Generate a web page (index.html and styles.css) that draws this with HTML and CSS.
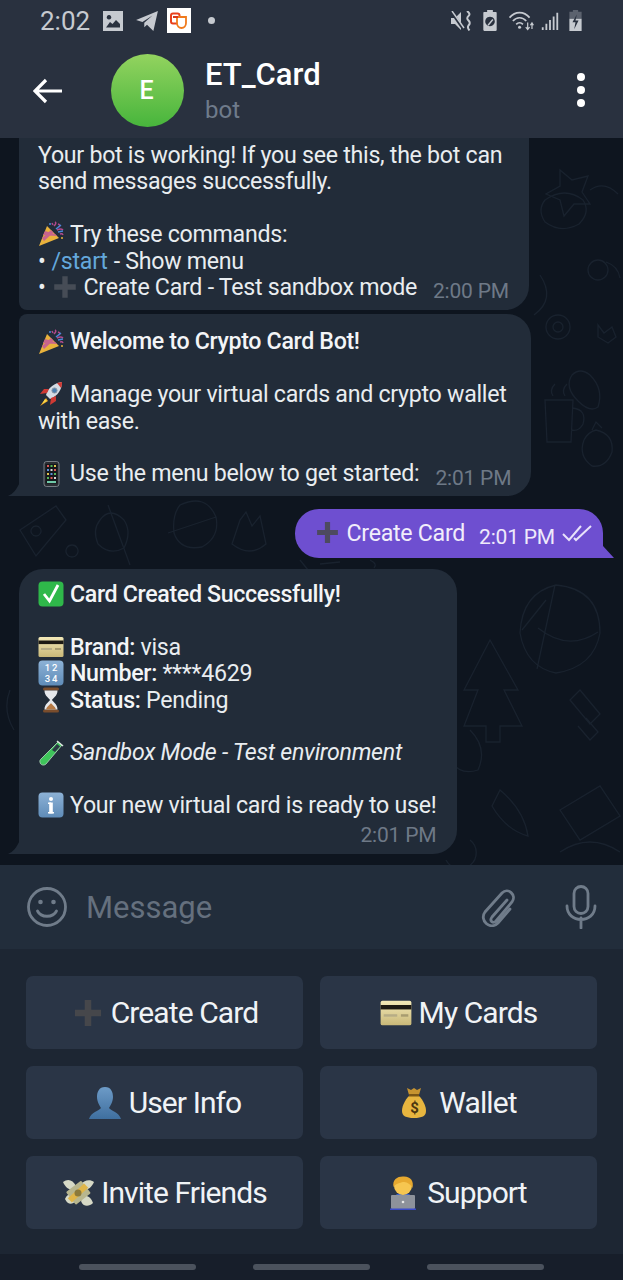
FILE: index.html
```html
<!DOCTYPE html>
<html lang="en">
<head>
<meta charset="utf-8">
<title>ET_Card</title>
<link rel="stylesheet" href="styles.css">
</head>
<body>
<svg class="defs" width="0" height="0" aria-hidden="true">
  <defs>
    <linearGradient id="gradCard" x1="0" y1="0" x2="0" y2="1"><stop offset="0" stop-color="#f3e9b8"/><stop offset="1" stop-color="#c9b878"/></linearGradient>
    <linearGradient id="gradUser" x1="0" y1="0" x2="0" y2="1"><stop offset="0" stop-color="#6d9bc7"/><stop offset="1" stop-color="#3f6f9f"/></linearGradient>
    <linearGradient id="gradKey" x1="0" y1="0" x2="0" y2="1"><stop offset="0" stop-color="#8db2d6"/><stop offset="1" stop-color="#5f8cb8"/></linearGradient>
    <symbol id="e-party" viewBox="0 0 26 26">
      <path d="M1 25 L9 5 L21 17 Z" fill="#e9b23c"/>
      <path d="M4 17 L13 9 L15.500 11.500 L6 20 Z M7 10 L17 13 L19 15 L5 14 Z" fill="#c8648c"/>
      <path d="M16 5 q3-3 1-4 M20 3 q3 1 1 3 M14 2 l1 2 M19 9 q4-2 6 0 M22 13 q2-1 3 1" stroke="#b24a8c" stroke-width="1.500" fill="none"/>
      <path d="M18 8 l5-4 M20 11 l5-1" stroke="#4a86d8" stroke-width="1.600"/>
      <circle cx="24" cy="17" r="1" fill="#e9b23c"/><circle cx="12" cy="3" r="1" fill="#4a86d8"/>
    </symbol>
    <symbol id="e-rocket" viewBox="0 0 26 26">
      <path d="M8 14 C10 6 17 2 24 1 C24 8 20 15 12 18 Z" fill="#d4dce4"/>
      <path d="M19 2 L24 1 C24 3 24 5 23 7 Z" fill="#cf3a34"/>
      <circle cx="16.500" cy="9.500" r="2.600" fill="#4a7fb0" stroke="#8a98a6"/>
      <path d="M9 12 L2 13 L6 8 L11 8 Z M13 17 L12 24 L18 20 L18 15 Z" fill="#cf3a34"/>
      <path d="M8 17 L2 25 L10 20 Z" fill="#f0a51e"/><path d="M7 18 L4 23 L9 20 Z" fill="#f7d94c"/>
    </symbol>
    <symbol id="e-phone" viewBox="0 0 26 26">
      <rect x="6" y="0.500" width="15" height="25" rx="2.500" fill="#2a2d33" stroke="#9aa0a6" stroke-width=".7"/>
      <rect x="7.500" y="3" width="12" height="19.500" fill="#15181c"/>
      <g fill="#d8d8d8"><rect x="9" y="4" width="2" height="2" fill="#d95757"/><rect x="12.500" y="4" width="2" height="2" fill="#57b557"/><rect x="16" y="4" width="2" height="2" fill="#e2c14f"/><rect x="9" y="8" width="2" height="2" fill="#5d8fd9"/><rect x="12.500" y="8" width="2" height="2"/><rect x="16" y="8" width="2" height="2" fill="#d95757"/><rect x="9" y="12" width="2" height="2" fill="#e2c14f"/><rect x="12.500" y="12" width="2" height="2" fill="#5d8fd9"/><rect x="16" y="12" width="2" height="2" fill="#57b557"/><rect x="9" y="16" width="2" height="2" fill="#57b557"/><rect x="12.500" y="16" width="2" height="2" fill="#d95757"/><rect x="16" y="16" width="2" height="2"/><rect x="9" y="20" width="9" height="2" fill="#6fc9a8"/></g>
    </symbol>
    <symbol id="e-check" viewBox="0 0 26 26">
      <rect x=".5" y=".5" width="25" height="25" rx="4" fill="#2fb84a"/>
      <path d="M6 13 L11.500 20 L20 4" fill="none" stroke="#fff" stroke-width="2.800"/>
    </symbol>
    <symbol id="e-card" viewBox="0 0 26 26">
      <rect x=".5" y="3" width="25" height="20" rx="1.500" fill="url(#gradCard)"/>
      <rect x=".5" y="6.500" width="25" height="3.600" fill="#1d1a14"/>
      <rect x="3" y="14" width="11" height="2" fill="#b7ad86"/><rect x="17" y="14" width="6" height="2" fill="#a89c70"/>
    </symbol>
    <symbol id="e-keys" viewBox="0 0 26 26">
      <rect x=".5" y=".5" width="25" height="25" rx="4" fill="url(#gradKey)"/>
      <text x="13" y="11" class="svg-keys" text-anchor="middle">1 2</text>
      <text x="13" y="22" class="svg-keys" text-anchor="middle">3 4</text>
    </symbol>
    <symbol id="e-hour" viewBox="0 0 26 26">
      <rect x="5" y="0.500" width="16" height="3" rx="1.500" fill="#7a4d2c"/><rect x="5" y="22.500" width="16" height="3" rx="1.500" fill="#7a4d2c"/>
      <path d="M6.500 3.500 H19.500 C19.500 9 15 11 14 13 C15 15 19.500 17 19.500 22.500 H6.500 C6.500 17 11 15 12 13 C11 11 6.500 9 6.500 3.500 Z" fill="#e6e8ec"/>
      <path d="M8 22.500 C9 19 12 18 13 16 C14 18 17 19 18 22.500 Z" fill="#b67a45"/>
    </symbol>
    <symbol id="e-tube" viewBox="0 0 26 26">
      <path d="M20 2 L24 5 L8 24 C6 26 2 25 2 22 C1.500 21 2 20 3 19 Z" fill="#3ec45a" stroke="#b7d8c0" stroke-width=".8"/>
      <path d="M19 1 L25 6" stroke="#d8e2dc" stroke-width="1.600"/>
      <path d="M19 4 L22 6.500 L17 12 L14 10 Z" fill="#2b3844"/>
    </symbol>
    <symbol id="e-info" viewBox="0 0 26 26">
      <rect x=".5" y=".5" width="25" height="25" rx="4" fill="url(#gradKey)"/>
      <circle cx="13" cy="7" r="2" fill="#fff"/><rect x="11.200" y="10.500" width="3.600" height="11" fill="#fff"/><rect x="10" y="10.500" width="3" height="1.500" fill="#fff"/><rect x="10" y="20" width="6" height="1.500" fill="#fff"/>
    </symbol>
    <symbol id="e-plus" viewBox="0 0 26 26">
      <path d="M10.500 3 H15.500 V10.500 H23 V15.500 H15.500 V23 H10.500 V15.500 H3 V10.500 H10.500 Z" fill="currentColor"/>
    </symbol>
    <symbol id="e-user" viewBox="0 0 32 34">
      <path d="M16 1 C22 1 24 6 24 11 C24 16 21 20 20 22 C22 25 30 26 32 33 H0 C2 26 10 25 12 22 C11 20 8 16 8 11 C8 6 10 1 16 1 Z" fill="url(#gradUser)"/>
    </symbol>
    <symbol id="e-bag" viewBox="0 0 26 32">
      <path d="M6 1 L10 3 L13 1 L16 3 L20 1 L18 8 H8 Z" fill="#c79430"/>
      <path d="M8 9 H18 C22 13 25 19 25 24 C25 29 21 31 13 31 C5 31 1 29 1 24 C1 19 4 13 8 9 Z" fill="#e7b53f"/>
      <rect x="8" y="7" width="10" height="2.500" fill="#7a5616"/>
      <text x="13" y="26" class="svg-dollar" text-anchor="middle">$</text>
    </symbol>
    <symbol id="e-wings" viewBox="0 0 32 32">
      <path d="M1 5 C6 1 11 3 14 9 L11 13 C7 13 3 10 1 5 Z M32 5 C28 2 22 3 18 8 L22 13 C26 13 30 10 32 5 Z M3 22 C5 17 9 16 12 18 L14 24 C10 28 6 28 3 22 Z M31 26 C27 30 21 30 19 24 L21 19 C25 18 29 20 31 26 Z" fill="#d6d9c6"/>
      <rect x="7" y="8" width="19" height="16" rx="1" fill="#b8b68e" transform="rotate(-38 16 16)"/>
      <rect x="13" y="5" width="6" height="22" fill="#e0b64a" transform="rotate(48 16 16)"/>
      <circle cx="16" cy="16" r="3.500" fill="#8c7a3b"/>
    </symbol>
    <symbol id="e-tech" viewBox="0 0 26 34">
      <path d="M4 24 C4 18 8 17 13 17 C18 17 22 18 22 24 Z" fill="#3a61c9"/>
      <ellipse cx="13" cy="10" rx="9" ry="9" fill="#f6c650"/>
      <path d="M3.500 11 C2 3 8 0 14 .5 C21 1 24 5 22.500 12 C20 7 16 6 13 6 C10 7 6 7 3.500 11 Z" fill="#e7a92f"/>
      <rect x="1" y="19" width="24" height="14" rx="1" fill="#8d929b"/>
      <rect x="0" y="32.500" width="26" height="1.500" fill="#3a4bc9"/>
      <circle cx="13" cy="26" r="1.300" fill="#e8e8e8"/>
    </symbol>
  </defs>
</svg>

<div class="phone">
  <header class="appbar">
    <div class="status">
      <div class="status-left">
        <span class="clock">2:02</span>
        <svg class="st-ico" width="20" height="20" viewBox="0 0 20 20"><path fill="#c6cad0" fill-rule="evenodd" d="M0 0 H20 V20 H0 Z M3 16.500 H17 V13 L13 9 L9.500 13 L7 11 Z M6 4 a2.300 2.300 0 1 0 .01 0 Z"/></svg>
        <svg class="st-ico" width="24" height="20" viewBox="0 0 24 22"><path fill="#c6cad0" d="M0 10 L24 0 L19 22 L12 15 L9 18 L9 13 L18 5 L7 12 Z"/></svg>
        <span class="appicon"><svg width="18" height="18" viewBox="0 0 18 18"><rect x="1" y="1.500" width="8.500" height="10" rx="2" fill="none" stroke="#e8401c" stroke-width="2"/><path d="M7 5 H16 V11 C16 14 14 16 11.500 16 C9 16 7 14 7 11 Z" fill="#fff" stroke="#f07a1c" stroke-width="1.800"/><path d="M3 5 H8" stroke="#d8361c" stroke-width="2"/></svg></span>
        <span class="st-dot"></span>
      </div>
      <div class="status-right">
        <svg class="st-wide" width="21" height="20" viewBox="0 0 21 20"><path fill="#c6cad0" d="M0 7 H4 L10 1 V19 L4 13 H0 Z"/><path d="M0 0 L13 19" stroke="#29313f" stroke-width="3"/><path d="M1 0 L13 17" stroke="#c6cad0" stroke-width="1.500"/><path d="M16 0 q4 3 1.500 5 q-2.500 2 0 4.500 q2.500 2.500 0 5 q-1.500 2 1 5" fill="none" stroke="#c6cad0" stroke-width="2"/></svg>
        <svg class="st-wide" width="14" height="21" viewBox="0 0 14 22"><path fill="#c6cad0" fill-rule="evenodd" d="M4 0 H10 V2 H13 C13.500 2 14 2.500 14 3 V21 C14 21.500 13.500 22 13 22 H1 C.5 22 0 21.500 0 21 V3 C0 2.500 .5 2 1 2 H4 Z M7 7 a5 5 0 1 0 .01 0 Z"/><path d="M5 16 L10 10" stroke="#c6cad0" stroke-width="1.500"/></svg>
        <svg class="st-narrow" width="26" height="21" viewBox="0 0 26 22"><g fill="none" stroke="#c6cad0" stroke-width="1.800"><path d="M1 8 C7 1 16 1 22 8"/><path d="M4.500 11.500 C8.500 7 14.500 7 18.500 11.500"/><path d="M8 15 C10 13 13 13 15 15"/></g><circle cx="11.500" cy="18" r="1.600" fill="#c6cad0"/><path d="M20 13 v7 M18 18 l2 2.500 l2-2.500 M24.500 20 v-6 M22.800 16 l1.700-2.500 l1.500 2.500" fill="none" stroke="#c6cad0" stroke-width="1.300"/></svg>
        <svg width="18" height="20" viewBox="0 0 18 22"><path fill="#c6cad0" d="M0 18 h2 v3 h-2 Z M4 14 h2 v7 h-2 Z M8 10 h2 v11 h-2 Z M12 6 h2 v15 h-2 Z M16 2 h2 v19 h-2 Z"/></svg>
        <svg width="15" height="21" viewBox="0 0 14 24"><path fill="#5b626e" d="M4 0 H10 V2 H14 V10 H0 V2 H4 Z"/><path fill="#c6cad0" d="M0 10 H14 V24 H0 Z"/><path fill="#29313f" d="M8.500 5 L3.500 14 H7 L5.500 22 L10.500 12 H7 Z"/></svg>
      </div>
    </div>
    <div class="titlebar">
      <svg class="back" width="30" height="26" viewBox="0 0 30 26"><path d="M29 13 H2 M13 2 L2 13 L13 24" fill="none" stroke="#fff" stroke-width="3.200"/></svg>
      <div class="avatar">E</div>
      <div class="title">
        <div class="title-name">ET_Card</div>
        <div class="title-sub">bot</div>
      </div>
      <div class="dots"><span></span><span></span><span></span></div>
    </div>
  </header>

  <main class="chat">
    <svg class="wallpaper" width="623" height="727" viewBox="0 138 623 727" aria-hidden="true">
      <g fill="none" stroke="#19222e" stroke-width="1.300">
        <path d="M560 170 l12 10 l16-4 l-6 16 l8 12 l-16 0 l-10 12 l-4-16 l-14-6 l14-8 Z"/>
        <path d="M545 200 q20-14 38 0 q8 12-4 24 q-18 10-34-2 q-8-12 0-22 Z M590 190 q14-10 28 4"/>
        <circle cx="598" cy="270" r="10"/><path d="M606 262 q12 4 14 16 M540 275 q16 24 -6 40"/>
        <circle cx="558" cy="327" r="12"/><circle cx="558" cy="327" r="5"/><path d="M598 325 l6 8 l8-6 l4 10 l-8 6 l-10-6 Z"/>
        <path d="M590 375 q14 14 8 32 q-8 6-20-6 q-14-14-6-26 q8-8 18 0 Z"/>
        <path d="M545 400 h28 l-2 42 h-24 Z M573 408 q14 2 10 16 q-4 8-12 6 M553 396 q-4-6 2-12 M565 396 q-4-6 2-12"/>
        <path d="M596 430 q18 4 16 22 q-6 16-20 14 q-14-10-8-26 q4-8 12-10 Z M592 430 l4-8 l6 6"/>
        <path d="M180 505 q26-12 36 12 q4 20-14 30 q-22 4-28-14 q-2-18 6-28 Z M168 533 l48-16"/>
        <path d="M20 530 l36 -24 l10 14 l-30 36 Z M36 526 a5 5 0 1 0 .01 0"/><path d="M72 545 a6 6 0 1 0 .01 0 M108 505 l22 60"/>
        <path d="M240 520 l-8 24 q18 14 34 0 l-6-28 l-8 10 l-6-14 Z"/>
        <path d="M100 520 q10-14 24 0 q8 12 0 28 q-14 8-26-4 q-6-14 2-24 Z"/>
        <path d="M300 560 l8 10 M340 562 l-20 2 M370 560 q8 4 4 8"/>
        <path d="M556 585 q44 4 44 48 q-6 34-44 40 q-30-6-36-40 q2-40 36-48 Z M555 585 l-18 84 M598 632 q-30 20 -60 -4 M522 630 l24-30"/>
        <path d="M490 640 l28 50 l-14 0 l18 36 l-22 0 l0 16 l-14 0 l0-16 l-22 0 l14-36 l-14 0 Z"/>
        <path d="M580 690 l20 24 l-10 10 l-20-24 Z M586 718 l12 14 l-8 8 l-12-14"/>
        <path d="M500 790 q24 20 28 46 q-22-6-36-30 Z M560 810 l40-24 l20 30 l-40 24 Z"/>
        <path d="M10 690 q-8 20 4 40 M470 730 q18 18 8 40 q-18 6-28-10"/>
        <path d="M470 840 a16 16 0 1 1 -24 20 M560 852 q30-20 60 0"/>
      </g>
    </svg>

    <article class="bubble in grouped-bottom first">
      <div class="line"><span>Your bot is working! If you see this, the bot can</span></div>
      <div class="line"><span>send messages successfully.</span></div>
      <div class="line"></div>
      <div class="line"><svg class="emoji"><use href="#e-party"/></svg><span>Try these commands:</span></div>
      <div class="line tight"><span>•</span><span class="link">/start</span><span>- Show menu</span></div>
      <div class="line last">
        <div class="line tight"><span>•</span><svg class="emoji plus-small"><use href="#e-plus"/></svg><span>Create Card - Test sandbox mode</span></div>
        <time class="time">2:00 PM</time>
      </div>
    </article>

    <article class="bubble in tailed grouped-top second">
      <div class="line"><svg class="emoji"><use href="#e-party"/></svg><strong>Welcome to Crypto Card Bot!</strong></div>
      <div class="line"></div>
      <div class="line"><svg class="emoji"><use href="#e-rocket"/></svg><span>Manage your virtual cards and crypto wallet</span></div>
      <div class="line"><span>with ease.</span></div>
      <div class="line"></div>
      <div class="line last">
        <div class="line"><svg class="emoji"><use href="#e-phone"/></svg><span>Use the menu below to get started:</span></div>
        <time class="time">2:01 PM</time>
      </div>
      <svg class="tail tail-left" width="12" height="14" viewBox="0 0 12 14"><path d="M12 0 V14 H0 C5 12 9 7 12 0 Z" fill="#222c39"/></svg>
    </article>

    <article class="bubble out">
      <div class="line last">
        <div class="line"><svg class="emoji plus-dark"><use href="#e-plus"/></svg><span>Create Card</span></div>
        <div class="out-meta">
          <time class="time">2:01 PM</time>
          <svg width="30" height="18" viewBox="0 0 30 18"><path d="M1 10 L7 16 L19 2 M12 14 L14 16 L29 2" fill="none" stroke="#e8e2fa" stroke-width="2"/></svg>
        </div>
      </div>
    </article>

    <article class="bubble in tailed result">
      <div class="line"><svg class="emoji"><use href="#e-check"/></svg><strong>Card Created Successfully!</strong></div>
      <div class="line"></div>
      <div class="line"><svg class="emoji"><use href="#e-card"/></svg><span><strong>Brand:</strong> visa</span></div>
      <div class="line"><svg class="emoji"><use href="#e-keys"/></svg><span><strong>Number:</strong> ****4629</span></div>
      <div class="line"><svg class="emoji"><use href="#e-hour"/></svg><span><strong>Status:</strong> Pending</span></div>
      <div class="line"></div>
      <div class="line"><svg class="emoji"><use href="#e-tube"/></svg><em>Sandbox Mode - Test environment</em></div>
      <div class="line"></div>
      <div class="line"><svg class="emoji"><use href="#e-info"/></svg><span>Your new virtual card is ready to use!</span></div>
      <div class="time-row"><time class="time">2:01 PM</time></div>
      <svg class="tail tail-left" width="12" height="14" viewBox="0 0 12 14"><path d="M12 0 V14 H0 C5 12 9 7 12 0 Z" fill="#222c39"/></svg>
    </article>
  </main>

  <section class="composer">
    <svg width="42" height="42" viewBox="0 0 42 42"><g fill="none" stroke="#707c8a" stroke-width="2.800"><circle cx="21" cy="21" r="18.500"/><path d="M11.500 25 C15 32 27 32 30.500 25" stroke-linecap="round"/></g><circle cx="14.500" cy="16" r="2.300" fill="#707c8a"/><circle cx="27.500" cy="16" r="2.300" fill="#707c8a"/></svg>
    <div class="placeholder">Message</div>
    <svg class="clip" width="36" height="40" viewBox="0 0 36 40"><path d="M27 13 L12 30 C9 34 13 37 16 34 L32 15 C37 8 28 0 22 6 L5 25 C-1 33 10 44 18 36 L30 22" fill="none" stroke="#707c8a" stroke-width="2.800" stroke-linecap="round"/></svg>
    <svg class="mic" width="32" height="44" viewBox="0 0 32 44"><g fill="none" stroke="#707c8a" stroke-width="2.800"><rect x="9" y="1.500" width="14" height="27" rx="7"/><path d="M2 21 C2 39 30 39 30 21 M16 33 V43" stroke-linecap="round"/></g></svg>
  </section>

  <section class="keyboard">
    <button class="key plus-gap"><svg class="emoji plus-key"><use href="#e-plus"/></svg><span>Create Card</span></button>
    <button class="key"><svg class="emoji key-e"><use href="#e-card"/></svg><span>My Cards</span></button>
    <button class="key"><svg class="emoji key-e user"><use href="#e-user"/></svg><span>User Info</span></button>
    <button class="key wide-gap"><svg class="emoji key-e bag"><use href="#e-bag"/></svg><span>Wallet</span></button>
    <button class="key"><svg class="emoji key-e"><use href="#e-wings"/></svg><span>Invite Friends</span></button>
    <button class="key wide-gap"><svg class="emoji key-e tech"><use href="#e-tech"/></svg><span>Support</span></button>
  </section>

  <nav class="navbar"><span></span><span></span><span></span></nav>
</div>
</body>
</html>
```

FILE: styles.css
```css
* { box-sizing: border-box; }
html, body { margin: 0; padding: 0; background: #0e151f; }
body { font-family: Roboto, "Liberation Sans", sans-serif; color: #eef1f4; }
.defs { position: absolute; }
.svg-keys { font: 500 9.5px Roboto, sans-serif; fill: #fff; }
.svg-dollar { font: 700 15px Roboto, sans-serif; fill: #4a3510; }

.phone { width: 623px; height: 1280px; display: flex; flex-direction: column; overflow: hidden; }

/* header */
.appbar { height: 138px; flex: none; background: #29313f; }
.status { height: 41px; display: flex; align-items: center; justify-content: space-between; padding: 0 40px; }
.status-left, .status-right { display: flex; align-items: center; }
.status-left { gap: 12px; }
.status-right { gap: 9px; }
.st-wide { margin-right: 2px; }
.st-narrow { margin-right: -2px; }
.clock { font-size: 26px; color: #c6cad0; margin-right: 1px; }
.appicon { width: 24px; height: 25px; margin-left: -4px; background: #fff; display: flex; align-items: center; justify-content: center; }
.st-dot { width: 7px; height: 7px; border-radius: 50%; background: #c6cad0; margin-left: 5px; }
.titlebar { height: 97px; display: flex; align-items: center; padding: 0 0 0 33px; }
.back { flex: none; margin-top: 2px; }
.avatar { width: 73px; height: 73px; flex: none; margin-left: 48px; margin-top: 1px; border-radius: 50%; background: linear-gradient(#93d35f, #47b53c); color: #fff; display: flex; align-items: center; justify-content: center; font-size: 25px; font-weight: 500; padding-right: 2px; }
.title { margin-left: 21px; flex: 1; margin-top: 2px; }
.title-name { font-size: 31px; line-height: 38px; font-weight: 500; color: #fff; }
.title-sub { font-size: 24px; line-height: 32px; color: #6f7b8b; }
.dots { width: 8px; display: flex; flex-direction: column; gap: 5px; margin-right: 38px; margin-top: 1px; }
.dots span { width: 8px; height: 8px; border-radius: 50%; background: #fff; }

/* chat */
.chat { position: relative; height: 727px; flex: none; overflow: hidden; background: #0e151f; display: flex; flex-direction: column; justify-content: flex-end; padding: 0 0 11px 19px; }
.wallpaper { position: absolute; left: 0; top: 0; }
.bubble { position: relative; flex: none; align-self: flex-start; background: #222c39; border-radius: 24px; padding: 13px 20px 10px 19px; font-size: 23.200px; letter-spacing: -0.280px; line-height: 26.400px; color: #e9edf0; }
.first { padding-top: 40px; padding-bottom: 10px; }
.bubble strong { font-weight: 500; color: #f3f5f7; letter-spacing: -0.340px; }
.bubble em { font-style: italic; }
.line { display: flex; align-items: center; gap: 6px; height: 26.400px; white-space: nowrap; }
.line.tight { gap: 6px; }
.line.last { justify-content: space-between; gap: 16px; }
.link { color: #64a8dc; }
.emoji { width: 26px; height: 26px; flex: none; }
.plus-small { color: #464c56; width: 28px; height: 28px; margin: 0 -1px; }
.plus-dark { color: #4d4a5f; width: 27px; height: 27px; }
.time { font-size: 21px; letter-spacing: -0.200px; line-height: 24px; color: #6e7987; white-space: nowrap; position: relative; top: 4px; }
.time-row { display: flex; justify-content: flex-end; height: 26.400px; }

.grouped-bottom { border-bottom-left-radius: 8px; }
.grouped-top { border-top-left-radius: 8px; }
.tailed { border-bottom-left-radius: 0; }
.second { margin-top: 4px; padding-top: 14px; padding-bottom: 9px; }
.tail { position: absolute; bottom: 0; }
.tail-left { left: -11px; }

.bubble.out { align-self: flex-end; margin-top: 13px; margin-right: 20px; background: #6e4fd0; border-bottom-right-radius: 0; padding: 11px 11px 12px 19px; color: #f1edfb; }
.bubble.out::after { content: ""; position: absolute; left: 100%; bottom: 0; width: 11px; height: 12px; background: #6e4fd0; clip-path: polygon(0 0, 100% 100%, 0 100%); }
.bubble.out .time { color: #efeafb; }
.bubble.out .line { gap: 5px; }
.bubble.out .line.last { gap: 14px; }
.out-meta { display: flex; align-items: center; gap: 7px; }
.result { margin-top: 11px; padding: 12px 21px 9px 19px; }

/* composer */
.composer { height: 84px; flex: none; background: #222d3b; display: flex; align-items: center; padding: 0 26px; }
.placeholder { flex: 1; margin-left: 18px; font-size: 31px; color: #65707e; }
.clip { margin-right: 49px; }

/* keyboard */
.keyboard { height: 305px; flex: none; background: #1d2633; display: grid; grid-template-columns: 277px 277px; grid-auto-rows: 72.500px; gap: 17.500px 17px; padding: 27px 26px 0; align-content: start; }
.key { border: 0; border-radius: 7px; background: #2a3546; color: #f0f3f6; font: 400 30px Roboto, sans-serif; letter-spacing: -0.900px; display: flex; align-items: center; justify-content: center; gap: 7px; padding: 1px 0 0; }
.wide-gap { gap: 11px; }
.plus-gap { gap: 6px; }
.plus-key { color: #46474b; width: 34px; height: 34px; }
.key-e { width: 32px; height: 32px; }
.key-e.user { height: 34px; width: 34px; }
.key-e.bag { width: 28px; }
.key-e.tech { height: 34px; width: 26px; }

/* nav */
.navbar { height: 26px; flex: none; background: #171e2a; display: flex; justify-content: center; align-items: center; gap: 57px; }
.navbar span { width: 117px; height: 6px; border-radius: 3px; background: #4b525d; }
```
